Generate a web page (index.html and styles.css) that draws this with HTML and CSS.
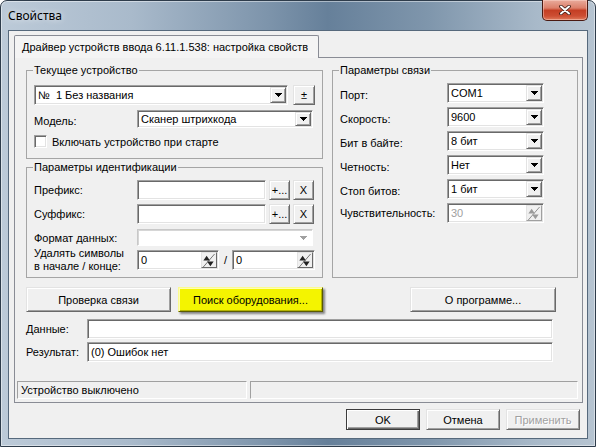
FILE: index.html
```html
<!DOCTYPE html>
<html lang="ru">
<head>
  <meta charset="UTF-8" />
  <title>Свойства</title>
  <link rel="stylesheet" href="styles.css">
</head>
<body>
  <div class="window">
    <!-- Title bar -->
    <div class="titlebar">
      <span class="title">Свойства</span>
      <div class="close-btn">
        <svg width="12" height="10" viewBox="0 0 12 10">
          <path d="M2 1.5 L10 8.5 M10 1.5 L2 8.5" stroke="#3a1a14" stroke-width="3.6" stroke-linecap="round"/>
          <path d="M2 1.5 L10 8.5 M10 1.5 L2 8.5" stroke="#fff" stroke-width="2" stroke-linecap="round"/>
        </svg>
      </div>
    </div>

    <div class="client">
      <div class="tabs">
        <div class="tab">Драйвер устройств ввода 6.11.1.538: настройка свойств</div>
      </div>

      <div class="tab-page">
        <div class="columns">
          <div class="col-left">
            <!-- Current device -->
            <fieldset class="group group-device">
              <legend>Текущее устройство</legend>
              <div class="group-body">
                <div class="row row-device">
                  <div class="combo combo-device">
                    <span class="combo-value">№&nbsp; 1 Без названия</span>
                    <span class="combo-arrow"><svg width="7" height="4"><path d="M0 0h7v1H0zM1 1h5v1H1zM2 2h3v1H2zM3 3h1v1H3z"/></svg></span>
                  </div>
                  <div class="btn btn-small btn-pm">±</div>
                </div>
                <div class="row row-model">
                  <span class="label label-low">Модель:</span>
                  <div class="combo combo-model">
                    <span class="combo-value">Сканер штрихкода</span>
                    <span class="combo-arrow"><svg width="7" height="4"><path d="M0 0h7v1H0zM1 1h5v1H1zM2 2h3v1H2zM3 3h1v1H3z"/></svg></span>
                  </div>
                </div>
                <div class="row row-check">
                  <span class="checkbox"></span>
                  <span class="check-text">Включать устройство при старте</span>
                </div>
              </div>
            </fieldset>

            <!-- Identification -->
            <fieldset class="group group-ident">
              <legend>Параметры идентификации</legend>
              <div class="group-body">
                <div class="row row-edit first">
                  <span class="label">Префикс:</span>
                  <div class="edit edit-affix"></div>
                  <div class="btn btn-small btn-tool">+...</div>
                  <div class="btn btn-small btn-tool">X</div>
                </div>
                <div class="row row-edit">
                  <span class="label">Суффикс:</span>
                  <div class="edit edit-affix"></div>
                  <div class="btn btn-small btn-tool">+...</div>
                  <div class="btn btn-small btn-tool">X</div>
                </div>
                <div class="row row-format">
                  <span class="label">Формат данных:</span>
                  <div class="combo combo-format disabled">
                    <span class="combo-value"></span>
                    <span class="combo-arrow"><svg width="7" height="4"><path d="M0 0h7v1H0zM1 1h5v1H1zM2 2h3v1H2zM3 3h1v1H3z"/></svg></span>
                  </div>
                </div>
                <div class="row row-trim">
                  <span class="label label-two">Удалять символы<br>в начале / конце:</span>
                  <div class="edit spin spin-start">
                    <span class="edit-value">0</span>
                    <span class="spin-btn"><svg width="16" height="18" viewBox="0 0 16 18"><path d="M1.5 16.5 L14.5 1.5" stroke="#6d6d6d"/><path d="M2.5 8.5 L6 3.5 L9.5 8.5 Z M6.5 9.5 L13.5 9.5 L10 14.5 Z" fill="#222"/></svg></span>
                  </div>
                  <span class="slash">/</span>
                  <div class="edit spin spin-end">
                    <span class="edit-value">0</span>
                    <span class="spin-btn"><svg width="16" height="18" viewBox="0 0 16 18"><path d="M1.5 16.5 L14.5 1.5" stroke="#6d6d6d"/><path d="M2.5 8.5 L6 3.5 L9.5 8.5 Z M6.5 9.5 L13.5 9.5 L10 14.5 Z" fill="#222"/></svg></span>
                  </div>
                </div>
              </div>
            </fieldset>
          </div>

          <!-- Connection -->
          <fieldset class="group group-conn">
            <legend>Параметры связи</legend>
            <div class="group-body">
              <div class="row row-conn first">
                <span class="label label-low">Порт:</span>
                <div class="combo combo-conn">
                  <span class="combo-value">COM1</span>
                  <span class="combo-arrow"><svg width="7" height="4"><path d="M0 0h7v1H0zM1 1h5v1H1zM2 2h3v1H2zM3 3h1v1H3z"/></svg></span>
                </div>
              </div>
              <div class="row row-conn">
                <span class="label label-low">Скорость:</span>
                <div class="combo combo-conn">
                  <span class="combo-value">9600</span>
                  <span class="combo-arrow"><svg width="7" height="4"><path d="M0 0h7v1H0zM1 1h5v1H1zM2 2h3v1H2zM3 3h1v1H3z"/></svg></span>
                </div>
              </div>
              <div class="row row-conn">
                <span class="label label-low">Бит в байте:</span>
                <div class="combo combo-conn">
                  <span class="combo-value">8 бит</span>
                  <span class="combo-arrow"><svg width="7" height="4"><path d="M0 0h7v1H0zM1 1h5v1H1zM2 2h3v1H2zM3 3h1v1H3z"/></svg></span>
                </div>
              </div>
              <div class="row row-conn">
                <span class="label label-low">Четность:</span>
                <div class="combo combo-conn">
                  <span class="combo-value">Нет</span>
                  <span class="combo-arrow"><svg width="7" height="4"><path d="M0 0h7v1H0zM1 1h5v1H1zM2 2h3v1H2zM3 3h1v1H3z"/></svg></span>
                </div>
              </div>
              <div class="row row-conn">
                <span class="label label-low">Стоп битов:</span>
                <div class="combo combo-conn">
                  <span class="combo-value">1 бит</span>
                  <span class="combo-arrow"><svg width="7" height="4"><path d="M0 0h7v1H0zM1 1h5v1H1zM2 2h3v1H2zM3 3h1v1H3z"/></svg></span>
                </div>
              </div>
              <div class="row row-conn">
                <span class="label">Чувствительность:</span>
                <div class="edit spin spin-sens disabled">
                  <span class="edit-value">30</span>
                  <span class="spin-btn"><svg width="16" height="18" viewBox="0 0 16 18"><path d="M1.5 16.5 L14.5 1.5" stroke="#8a8a8a"/><path d="M2.5 8.5 L6 3.5 L9.5 8.5 Z M6.5 9.5 L13.5 9.5 L10 14.5 Z" fill="#9a9a9a"/></svg></span>
                </div>
              </div>
            </div>
          </fieldset>
        </div>

        <!-- Action buttons -->
        <div class="btn-row">
          <div class="btn btn-wide">Проверка связи</div>
          <div class="btn btn-wide btn-highlight">Поиск оборудования...</div>
          <div class="btn btn-wide btn-about">О программе...</div>
        </div>

        <div class="field-row first">
          <span class="field-label">Данные:</span>
          <div class="edit edit-field"></div>
        </div>
        <div class="field-row">
          <span class="field-label">Результат:</span>
          <div class="edit edit-field"><span class="edit-value">(0) Ошибок нет</span></div>
        </div>

        <!-- Status bar -->
        <div class="statusbar">
          <div class="status-cell status-main">Устройство выключено</div>
          <div class="status-cell status-rest"></div>
        </div>
      </div>

      <div class="dialog-buttons">
        <div class="btn btn-dialog btn-default">OK</div>
        <div class="btn btn-dialog">Отмена</div>
        <div class="btn btn-dialog btn-disabled">Применить</div>
      </div>
    </div>
  </div>
</body>
</html>
```

FILE: styles.css
```css
/* Reset */
* {
  margin: 0;
  padding: 0;
  box-sizing: border-box;
}
body {
  width: 596px;
  height: 447px;
  overflow: hidden;
  background: #fff;
  font-family: "Liberation Sans", Arial, sans-serif;
  font-size: 11px;
  color: #000;
}

/* Window frame (Aero glass) */
.window {
  width: 596px;
  height: 447px;
  border: 1px solid #2e3c4b;
  border-radius: 7px 7px 0 0;
  padding: 0 7px 7px 7px;
  display: flex;
  flex-direction: column;
  background: linear-gradient(90deg, #bccad8 0%, #a9bacb 22%, #7d94ab 45%, #66809a 55%, #7f96ac 72%, #a8b9c9 90%, #b6c4d1 100%);
  box-shadow: inset 0 0 0 1px rgba(255, 255, 255, 0.45);
}
.titlebar {
  height: 29px;
  display: flex;
  align-items: flex-start;
  flex-shrink: 0;
}
.title {
  font-family: "Noto Sans", "Open Sans", sans-serif;
  font-size: 12px;
  line-height: 16px;
  padding-top: 7px;
  color: #000;
  text-shadow: 0 0 6px rgba(255, 255, 255, 0.8);
}
.close-btn {
  margin-left: auto;
  margin-top: -1px;
  width: 46px;
  height: 21px;
  border: 1px solid #4a1a12;
  border-top: none;
  border-radius: 0 0 5px 5px;
  background: linear-gradient(180deg, #e9ab9c 0%, #dc7f6a 40%, #c43e24 52%, #cd4e33 80%, #e07a5c 100%);
  box-shadow: inset 0 0 0 1px rgba(255, 220, 210, 0.45);
  display: flex;
  align-items: center;
  justify-content: center;
}

/* Client area */
.client {
  width: 580px;
  height: 409px;
  background: #f0f0f0;
  border: 1px solid #56697c;
}
.tabs {
  padding: 4px 0 0 5px;
  display: flex;
}
.tab {
  position: relative;
  z-index: 1;
  width: 305px;
  height: 23px;
  margin-bottom: -1px;
  padding-left: 7px;
  line-height: 22px;
  background: #f4f4f4;
  border: 1px solid #898c95;
  border-bottom: none;
  border-radius: 2px 2px 0 0;
  white-space: nowrap;
}
.tab-page {
  margin-left: 5px;
  width: 569px;
  height: 346px;
  padding: 6px 3px 0 2px;
  border: 1px solid #898c95;
  background: #f0f0f0;
}

/* Columns with group boxes */
.columns {
  display: flex;
  gap: 9px;
  margin-left: 9px;
  height: 214px;
}
.col-left {
  width: 297px;
  display: flex;
  flex-direction: column;
  gap: 2px;
}
.group {
  border: 1px solid #a5a5a5;
  min-width: 0;
  padding: 0;
  margin: 0;
}
.group legend {
  margin-left: 6px;
  padding: 0 1px;
  line-height: 13px;
}
.group-device {
  height: 95px;
}
.group-ident {
  height: 117px;
}
.group-conn {
  width: 246px;
  height: 214px;
}
.group-body {
  padding-left: 7px;
  display: flex;
  flex-direction: column;
}
.row {
  display: flex;
  align-items: center;
}
.label {
  width: 103px;
  flex-shrink: 0;
}
.label-low {
  padding-top: 4px;
}

/* Group 1 rows */
.row-device {
  margin-top: 8px;
  height: 20px;
  gap: 5px;
}
.combo-device {
  width: 254px;
  height: 20px;
}
.btn-pm {
  width: 22px;
  height: 20px;
}
.row-model {
  margin-top: 5px;
  height: 18px;
}
.combo-model {
  width: 176px;
  height: 18px;
}
.row-check {
  margin-top: 7px;
  height: 13px;
  gap: 5px;
}
.checkbox {
  width: 13px;
  height: 13px;
  background: #fff;
  border: 1px solid;
  border-color: #a0a0a0 #fff #fff #a0a0a0;
  box-shadow: inset 1px 1px 0 #696969, inset -1px -1px 0 #e3e3e3;
}

/* Group 2 rows */
.row-edit {
  margin-top: 4px;
  height: 20px;
}
.row-edit.first {
  margin-top: 6px;
}
.edit-affix {
  width: 129px;
  height: 20px;
  margin-right: 3px;
}
.btn-tool {
  width: 21px;
  height: 20px;
  margin-right: 3px;
}
.row-format {
  margin-top: 5px;
  height: 17px;
}
.combo-format {
  width: 176px;
  height: 17px;
}
.row-trim {
  margin-top: 4px;
  height: 20px;
}
.label-two {
  line-height: 13px;
}
.spin-start {
  width: 82px;
  height: 20px;
}
.slash {
  width: 13px;
  text-align: center;
}
.spin-end {
  width: 83px;
  height: 20px;
}

/* Connection group */
.group-conn .label {
  width: 107px;
}
.row-conn {
  margin-top: 4px;
  height: 20px;
}
.row-conn.first {
  margin-top: 6px;
}
.combo-conn,
.spin-sens {
  width: 97px;
  height: 20px;
}

/* Controls */
.edit,
.combo {
  background: #fff;
  border: 1px solid;
  border-color: #a0a0a0 #fff #fff #a0a0a0;
  box-shadow: inset 1px 1px 0 #696969, inset -1px -1px 0 #e3e3e3;
  display: flex;
  align-items: center;
  padding: 1px;
  overflow: hidden;
}
.combo-value,
.edit-value {
  flex: 1;
  padding-left: 2px;
  white-space: nowrap;
}
.combo-arrow {
  width: 16px;
  align-self: stretch;
  display: flex;
  align-items: center;
  justify-content: center;
  background: #f0f0f0;
  border: 1px solid;
  border-color: #e3e3e3 #696969 #696969 #e3e3e3;
  box-shadow: inset 1px 1px 0 #fff, inset -1px -1px 0 #a0a0a0;
}
.combo.disabled {
  border-color: #c8c8c8 #fff #fff #c8c8c8;
  box-shadow: inset 1px 1px 0 #d6d6d6;
}
.combo.disabled .combo-arrow {
  background: #fff;
  border-color: #fff;
  box-shadow: none;
  fill: #a0a0a0;
}
.spin-btn {
  width: 16px;
  align-self: stretch;
  display: flex;
  background: #f0f0f0;
  border: 1px solid;
  border-color: #e3e3e3 #696969 #696969 #e3e3e3;
  overflow: hidden;
}
.spin-btn svg {
  display: block;
  margin: -1px 0 0 -1px;
}
.edit.disabled {
  color: #a0a0a0;
}
.edit.disabled .spin-btn {
  border-color: #e3e3e3 #a0a0a0 #a0a0a0 #e3e3e3;
}

.btn {
  display: flex;
  align-items: center;
  justify-content: center;
  background: #f0f0f0;
  border: 1px solid;
  border-color: #e3e3e3 #696969 #696969 #e3e3e3;
  box-shadow: inset 1px 1px 0 #fff, inset -1px -1px 0 #a0a0a0;
  white-space: nowrap;
}

/* Action buttons */
.btn-row {
  display: flex;
  margin: 9px 0 0 9px;
  gap: 7px;
  height: 25px;
}
.btn-wide {
  width: 145px;
  height: 25px;
}
.btn-highlight {
  background: #f4f400;
  border-color: #fbfb90 #5a5a00 #5a5a00 #fbfb90;
  box-shadow: inset 1px 1px 0 #ffffb0, inset -1px -1px 0 #b4b400, 2px 2px 2px rgba(0, 0, 0, 0.45);
}
.btn-about {
  width: 146px;
  margin-left: 80px;
}

/* Data / result rows */
.field-row {
  display: flex;
  align-items: center;
  margin: 3px 0 0 9px;
  height: 20px;
}
.field-row.first {
  margin-top: 7px;
}
.field-label {
  width: 61px;
}
.edit-field {
  width: 466px;
  height: 20px;
}

/* Status bar */
.statusbar {
  display: flex;
  gap: 3px;
  margin: 19px 0 0 0;
  width: 561px;
  height: 18px;
}
.status-cell {
  height: 18px;
  border: 1px solid;
  border-color: #a0a0a0 #fff #fff #a0a0a0;
  padding-left: 3px;
  line-height: 16px;
}
.status-main {
  width: 230px;
}
.status-rest {
  flex: 1;
}

/* Dialog buttons */
.dialog-buttons {
  display: flex;
  justify-content: flex-end;
  gap: 6px;
  padding: 6px 7px 0 0;
}
.btn-dialog {
  width: 74px;
  height: 21px;
}
.btn-default {
  border-color: #3c3c3c;
  box-shadow: inset 1px 1px 0 #fff, inset -1px -1px 0 #696969, inset -2px -2px 0 #a0a0a0;
}
.btn-disabled {
  color: #a0a0a0;
  text-shadow: 1px 1px 0 #fff;
}
```
